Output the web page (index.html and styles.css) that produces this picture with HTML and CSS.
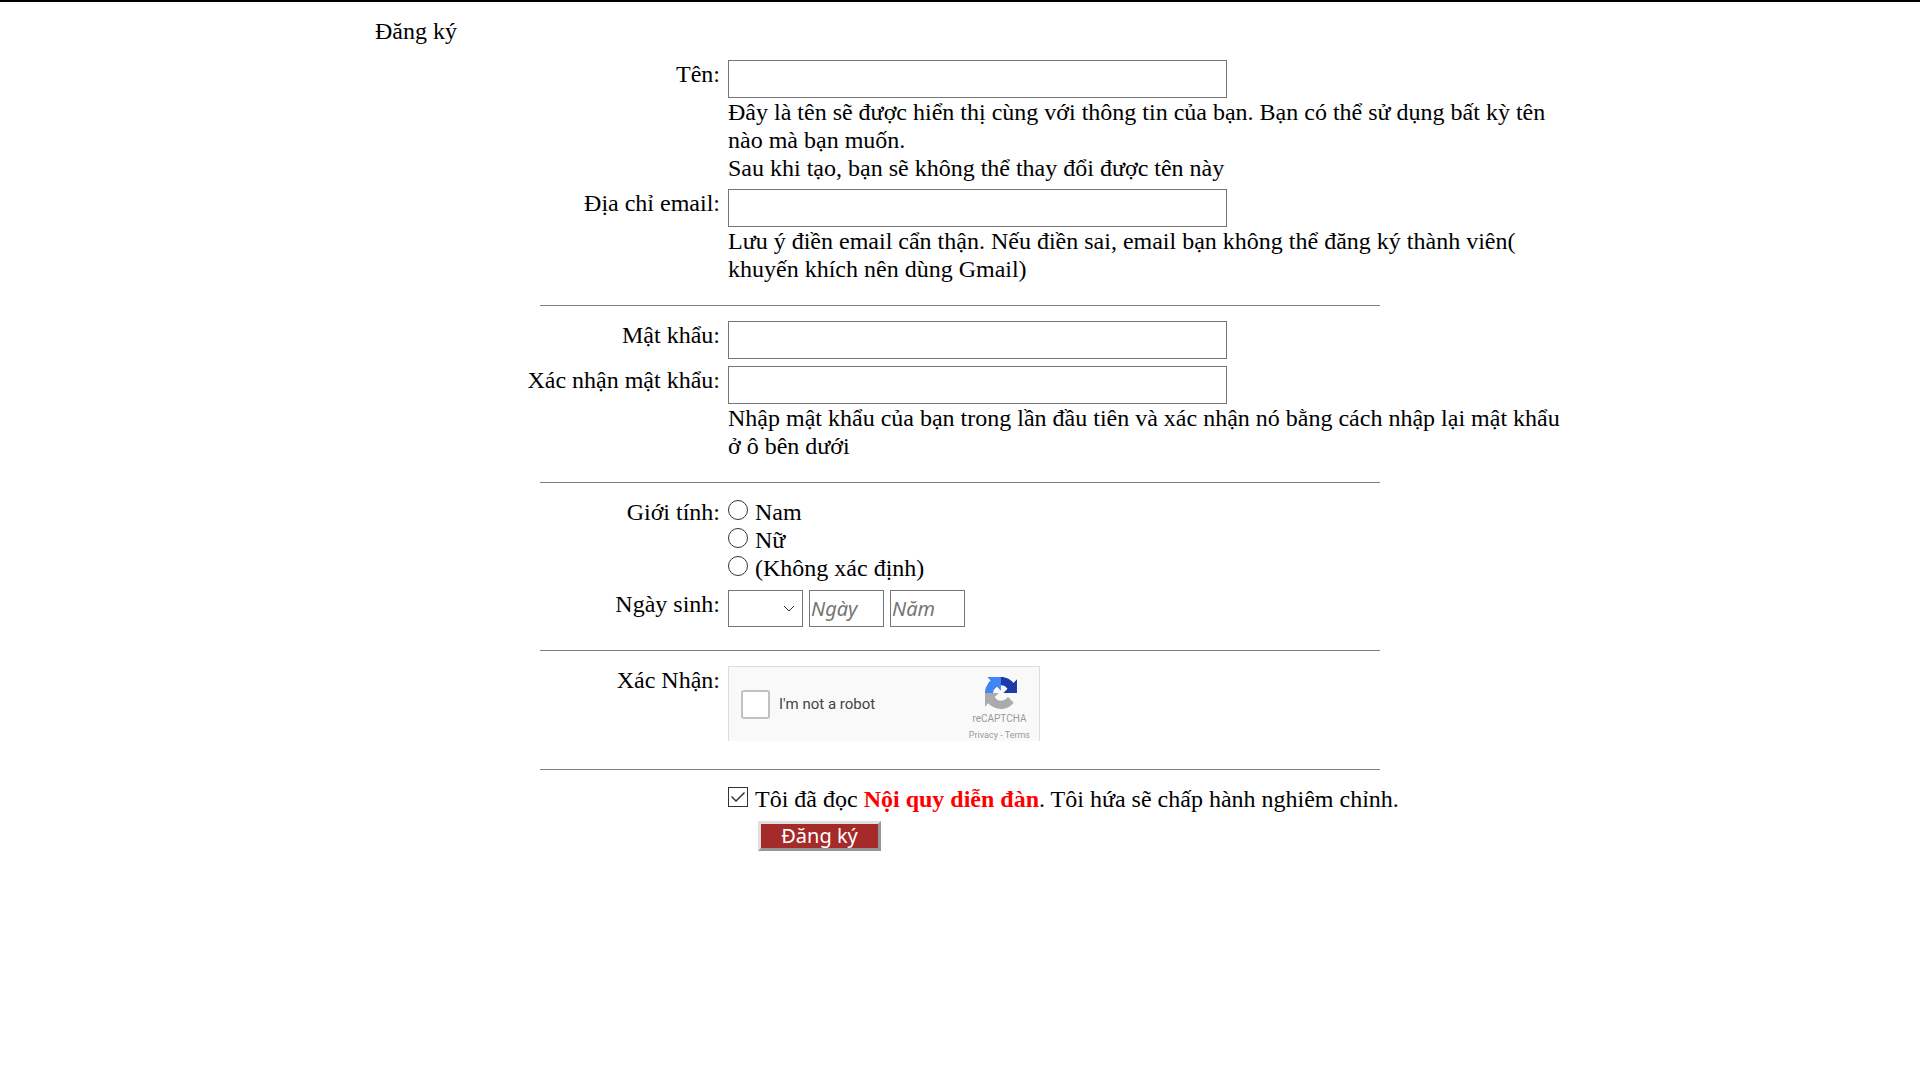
FILE: index.html
```html
<!DOCTYPE html>
<html lang="vi">
<head>
<meta charset="utf-8">
<meta name="viewport" content="width=device-width, initial-scale=1">
<title>Đăng ký</title>
<link rel="stylesheet" href="styles.css">
</head>
<body>
<main class="page">
  <h1 class="title">Đăng ký</h1>
  <form class="form">
    <section class="group">
      <div class="row">
        <label class="label" for="name">Tên:</label>
        <div class="field">
          <input class="control text" id="name" type="text">
          <p class="help">Đây là tên sẽ được hiển thị cùng với thông tin của bạn. Bạn có thể sử dụng bất kỳ tên nào mà bạn muốn.<br>Sau khi tạo, bạn sẽ không thể thay đổi được tên này</p>
        </div>
      </div>
      <div class="row">
        <label class="label" for="email">Địa chỉ email:</label>
        <div class="field">
          <input class="control text" id="email" type="email">
          <p class="help">Lưu ý điền email cẩn thận. Nếu điền sai, email bạn không thể đăng ký thành viên( khuyến khích nên dùng Gmail)</p>
        </div>
      </div>
    </section>
    <hr class="divider">
    <section class="group">
      <div class="row">
        <label class="label" for="password">Mật khẩu:</label>
        <div class="field"><input class="control text" id="password" type="password"></div>
      </div>
      <div class="row">
        <label class="label" for="confirm">Xác nhận mật khẩu:</label>
        <div class="field">
          <input class="control text" id="confirm" type="password">
          <p class="help">Nhập mật khẩu của bạn trong lần đầu tiên và xác nhận nó bằng cách nhập lại mật khẩu ở ô bên dưới</p>
        </div>
      </div>
    </section>
    <hr class="divider">
    <section class="group">
      <div class="row" role="radiogroup" aria-labelledby="gender">
        <span class="label" id="gender">Giới tính:</span>
        <div class="field">
          <label class="option"><input class="radio" type="radio" name="gender">Nam</label>
          <label class="option"><input class="radio" type="radio" name="gender">Nữ</label>
          <label class="option"><input class="radio" type="radio" name="gender">(Không xác định)</label>
        </div>
      </div>
      <div class="row birthday">
        <label class="label" for="month">Ngày sinh:</label>
        <div class="field date">
          <span class="picker">
            <select class="control small" id="month"><option></option></select>
            <svg class="chevron" viewBox="0 0 12 7" aria-hidden="true"><path d="M1 1l5 5 5-5" fill="none" stroke="#333"/></svg>
          </span>
          <input class="control small" type="text" placeholder="Ngày" aria-label="Ngày">
          <input class="control small" type="text" placeholder="Năm" aria-label="Năm">
        </div>
      </div>
    </section>
    <hr class="divider">
    <section class="group">
      <div class="row">
        <label class="label" for="robot">Xác Nhận:</label>
        <div class="field">
          <div class="captcha">
            <input class="captcha-box" id="robot" type="checkbox">
            <label class="captcha-text" for="robot">I'm not a robot</label>
            <div class="captcha-brand">
              <svg class="captcha-logo" viewBox="0 0 64 64" aria-hidden="true">
                <path fill="#1c3aa9" d="M64 31.955l-.033-1.37V4.687l-7.16 7.16C50.948 4.674 42.033.093 32.05.093c-10.4 0-19.622 4.96-25.458 12.64l11.736 11.86a15.55 15.55 0 0 1 4.754-5.334c2.05-1.6 4.952-2.906 8.968-2.906.485 0 .86.057 1.135.163 4.976.393 9.288 3.14 11.828 7.124l-8.307 8.307L64 31.953"/>
                <path fill="#4285f4" d="M31.862.094l-1.37.033H4.594l7.16 7.16C4.58 13.147 0 22.06 0 32.046c0 10.4 4.96 19.622 12.64 25.458L24.5 45.768a15.55 15.55 0 0 1-5.334-4.754c-1.6-2.05-2.906-4.952-2.906-8.968 0-.485.057-.86.163-1.135.393-4.976 3.14-9.288 7.124-11.828l8.307 8.307L31.86.095"/>
                <path fill="#ababab" d="M.001 32.045l.033 1.37v25.898l7.16-7.16c5.86 7.173 14.774 11.754 24.76 11.754 10.4 0 19.622-4.96 25.458-12.64l-11.736-11.86a15.55 15.55 0 0 1-4.754 5.334c-2.05 1.6-4.952 2.906-8.968 2.906-.485 0-.86-.057-1.135-.163-4.976-.393-9.288-3.14-11.828-7.124l8.307-8.307L0 32.047"/>
              </svg>
              <span class="captcha-name">reCAPTCHA</span>
              <span class="captcha-links"><a href="#privacy">Privacy</a> - <a href="#terms">Terms</a></span>
            </div>
          </div>
        </div>
      </div>
    </section>
    <hr class="divider">
    <section class="group">
      <div class="row">
        <div class="field unlabelled">
          <div class="option">
            <input class="check" id="agree" type="checkbox" checked>
            <label for="agree">Tôi đã đọc <a class="rules" href="#rules">Nội quy diễn đàn</a>. Tôi hứa sẽ chấp hành nghiêm chỉnh.</label>
          </div>
          <button class="submit" type="submit">Đăng ký</button>
        </div>
      </div>
    </section>
  </form>
</main>
</body>
</html>
```
FILE: styles.css
```css
* {
  box-sizing: border-box;
}

body {
  margin: 0;
  border-top: 2px solid #000;
  background: #fff;
  color: #000;
  font: 24px/28px "Liberation Serif", "Times New Roman", serif;
}

.page {
  max-width: 1200px;
  margin: 0 auto;
  padding: 15px 0;
}

.title {
  margin: 0 0 15px;
  padding-left: 15px;
  font-size: 24px;
  font-weight: normal;
}

.group {
  display: grid;
  gap: 7px;
}

.row {
  display: grid;
  grid-template-columns: 30% 1fr;
  column-gap: 8px;
}

.birthday {
  padding: 1px 0;
}

.label {
  text-align: right;
}

.unlabelled {
  grid-column: 2;
}

.help {
  margin: 0;
}

.control {
  display: block;
  margin: 0;
  border: 1px solid #767676;
  border-radius: 0;
  background: #fff;
  padding: 1px;
  font: 20px/28px "Noto Sans", "Open Sans", sans-serif;
}

.text {
  width: 60%;
  height: 38px;
}

.small {
  width: 75px;
  height: 37px;
}

.small::placeholder {
  color: #757575;
  font-style: italic;
}

.divider {
  width: 70%;
  height: 1px;
  margin: 22px auto 15px;
  border: 0;
  background: #808080;
}

.option {
  display: flex;
  gap: 7px;
}

.radio,
.check {
  appearance: none;
  flex: none;
  width: 20px;
  height: 20px;
  margin: 2px 0 0;
  border: 1px solid #333;
  background: #fff;
}

.radio {
  border-radius: 50%;
}

.check:checked::before {
  content: "";
  display: block;
  height: 18px;
  background: #333;
  clip-path: polygon(2px 9px, 3px 8px, 7px 12px, 15px 4px, 16px 5px, 7px 14px);
}

.date {
  display: flex;
  gap: 6px;
}

.picker {
  display: grid;
}

.picker .small {
  grid-area: 1 / 1;
  appearance: none;
}

.chevron {
  grid-area: 1 / 1;
  place-self: center end;
  width: 12px;
  height: 7px;
  margin-right: 8px;
  pointer-events: none;
}

.captcha {
  display: flex;
  align-items: center;
  width: 312px;
  height: 75px;
  margin-bottom: 6px;
  padding: 0 9px 0 12px;
  border: 1px solid #dcdcdc;
  border-bottom: 0;
  background: #f9f9f9;
  font-family: Roboto, sans-serif;
}

.captcha-box {
  appearance: none;
  width: 29px;
  height: 29px;
  margin: 0 9px 0 0;
  border: 2px solid #c1c1c1;
  border-radius: 3px;
  background: #fff;
}

.captcha-text {
  color: #444;
  font-size: 15px;
  font-weight: 400;
}

.captcha-brand {
  display: flex;
  flex-direction: column;
  align-items: center;
  align-self: flex-start;
  margin-left: auto;
  padding-top: 10px;
  color: #999;
}

.captcha-logo {
  width: 32px;
  height: 32px;
  margin-left: 4px;
}

.captcha-name {
  font-size: 10px;
  line-height: 20px;
}

.captcha-links {
  font-size: 9px;
  line-height: 12px;
}

.captcha-links a {
  color: inherit;
  text-decoration: none;
}

.rules {
  color: #f00;
  font-weight: bold;
  text-decoration: none;
}

.submit {
  display: block;
  width: 123px;
  height: 30px;
  margin: 8px 0 0 30px;
  padding: 0;
  border: 3px solid;
  border-color: #e0e0e0 #969696 #969696 #e0e0e0;
  background: #a52a2a;
  color: #fff;
  font: 20px/24px "Noto Sans", "Open Sans", sans-serif;
}
```
